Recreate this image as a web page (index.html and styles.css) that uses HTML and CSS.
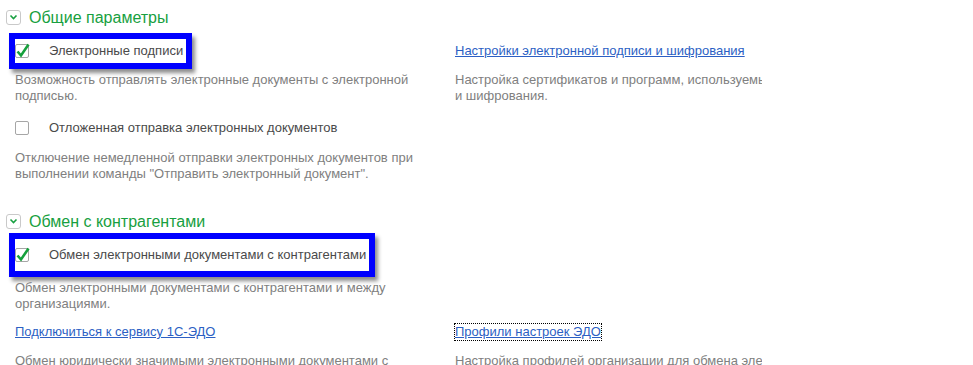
FILE: index.html
```html
<!DOCTYPE html>
<html lang="ru">
<head>
    <meta charset="UTF-8">
    <title>Настройки ЭДО</title>
    <link rel="stylesheet" href="styles.css">
</head>
<body>
    <div class="group">
        <div class="group-header">
            <span class="toggle">
                <svg width="9" height="6" viewBox="0 0 9 6"><path d="M1.5 1.5 L4.5 4.5 L7.5 1.5" fill="none" stroke="#17a040" stroke-width="1.6"/></svg>
            </span>
            <h2>Общие параметры</h2>
        </div>

        <div class="row row-first">
            <div class="cell">
                <label class="field highlight">
                    <span class="checkbox checked">
                        <svg width="16" height="16" viewBox="0 0 16 16"><path d="M2.5 8.5 L6 12.5 L13.5 1.5" fill="none" stroke="#15a03c" stroke-width="2.6"/></svg>
                    </span>
                    <span class="field-label">Электронные подписи</span>
                </label>
            </div>
            <div class="cell cell-right">
                <a class="link" href="#">Настройки электронной подписи и шифрования</a>
            </div>
        </div>
        <div class="row row-desc">
            <div class="cell"><p class="desc">Возможность отправлять электронные документы с электронной подписью.</p></div>
            <div class="cell cell-right"><p class="desc nowrap">Настройка сертификатов и программ, используемых для электронной подписи<br>и шифрования.</p></div>
        </div>

        <div class="row row-field">
            <div class="cell">
                <label class="field">
                    <span class="checkbox"></span>
                    <span class="field-label">Отложенная отправка электронных документов</span>
                </label>
            </div>
        </div>
        <div class="row row-desc2">
            <div class="cell"><p class="desc">Отключение немедленной отправки электронных документов при выполнении команды "Отправить электронный документ".</p></div>
        </div>
    </div>

    <div class="group group-second">
        <div class="group-header">
            <span class="toggle">
                <svg width="9" height="6" viewBox="0 0 9 6"><path d="M1.5 1.5 L4.5 4.5 L7.5 1.5" fill="none" stroke="#17a040" stroke-width="1.6"/></svg>
            </span>
            <h2>Обмен с контрагентами</h2>
        </div>

        <div class="row row-first">
            <div class="cell">
                <label class="field highlight highlight-tall">
                    <span class="checkbox checked">
                        <svg width="16" height="16" viewBox="0 0 16 16"><path d="M2.5 8.5 L6 12.5 L13.5 1.5" fill="none" stroke="#15a03c" stroke-width="2.6"/></svg>
                    </span>
                    <span class="field-label">Обмен электронными документами с контрагентами</span>
                </label>
            </div>
        </div>
        <div class="row row-desc3">
            <div class="cell"><p class="desc">Обмен электронными документами с контрагентами и между организациями.</p></div>
        </div>

        <div class="row row-link">
            <div class="cell">
                <a class="link" href="#">Подключиться к сервису 1С-ЭДО</a>
            </div>
            <div class="cell cell-right">
                <a class="link focused" href="#">Профили настроек ЭДО</a>
            </div>
        </div>
        <div class="row row-desc4">
            <div class="cell"><p class="desc">Обмен юридически значимыми электронными документами с контрагентами через сервис 1С-ЭДО.</p></div>
            <div class="cell cell-right"><p class="desc nowrap">Настройка профилей организации для обмена электронными документами</p></div>
        </div>
    </div>
</body>
</html>
```

FILE: styles.css
```css
* {
    margin: 0;
    padding: 0;
    box-sizing: border-box;
}

body {
    font-family: "Liberation Sans", Arial, sans-serif;
    font-size: 13px;
    color: #4a4a4a;
    background: #fff;
    width: 973px;
    height: 365px;
    overflow: hidden;
}

.group {
    padding-top: 8px;
}

.group-second {
    padding-top: 30px;
}

.group-header {
    display: flex;
    align-items: center;
    gap: 8px;
    height: 18px;
    padding-left: 6px;
}

.toggle {
    width: 15px;
    height: 15px;
    border: 1px solid #c9c9c9;
    border-radius: 3px;
    display: flex;
    align-items: center;
    justify-content: center;
    background: #fff;
}

.group-header h2 {
    font-size: 16px;
    font-weight: normal;
    color: #17a040;
    line-height: 18px;
    padding-top: 2px;
}

.row {
    display: grid;
    grid-template-columns: 440px 307px;
    padding-left: 15px;
}

.row-first {
    margin-top: 13px;
}

.row-desc {
    margin-top: 9px;
}

.row-field {
    margin-top: 12px;
}

.row-desc2 {
    margin-top: 10px;
}

.row-desc3 {
    margin-top: 13px;
}

.row-link {
    margin-top: 12px;
}

.row-desc4 {
    margin-top: 13px;
}

.cell-right {
    overflow: hidden;
}

.row-first .cell-right,
.row-link .cell-right {
    overflow: visible;
    display: flex;
    align-items: center;
}

.field {
    display: inline-flex;
    align-items: center;
    gap: 20px;
    height: 24px;
    padding-right: 3px;
}

/* blue annotation frame */
.highlight {
    background: #fff;
    box-shadow: 0 0 0 6px #0000ff, 3px 4px 4px 6px rgba(0, 0, 0, 0.45);
}

.highlight-tall {
    height: 32px;
    margin: -4px 0;
}

.checkbox {
    position: relative;
    width: 14px;
    height: 14px;
    border: 1px solid #a6a6a6;
    border-radius: 2px;
    background: #fff;
    flex-shrink: 0;
}

.checkbox svg {
    position: absolute;
    left: -1px;
    top: -2px;
}

.field-label {
    line-height: 16px;
    white-space: nowrap;
}

.desc {
    width: 420px;
    color: #808080;
    line-height: 16px;
}

.desc.nowrap {
    white-space: nowrap;
}

.link {
    color: #2c5fc4;
    text-decoration: underline;
    line-height: 16px;
}

.link.focused {
    outline: 1px dotted #000;
    outline-offset: 0;
}
```
